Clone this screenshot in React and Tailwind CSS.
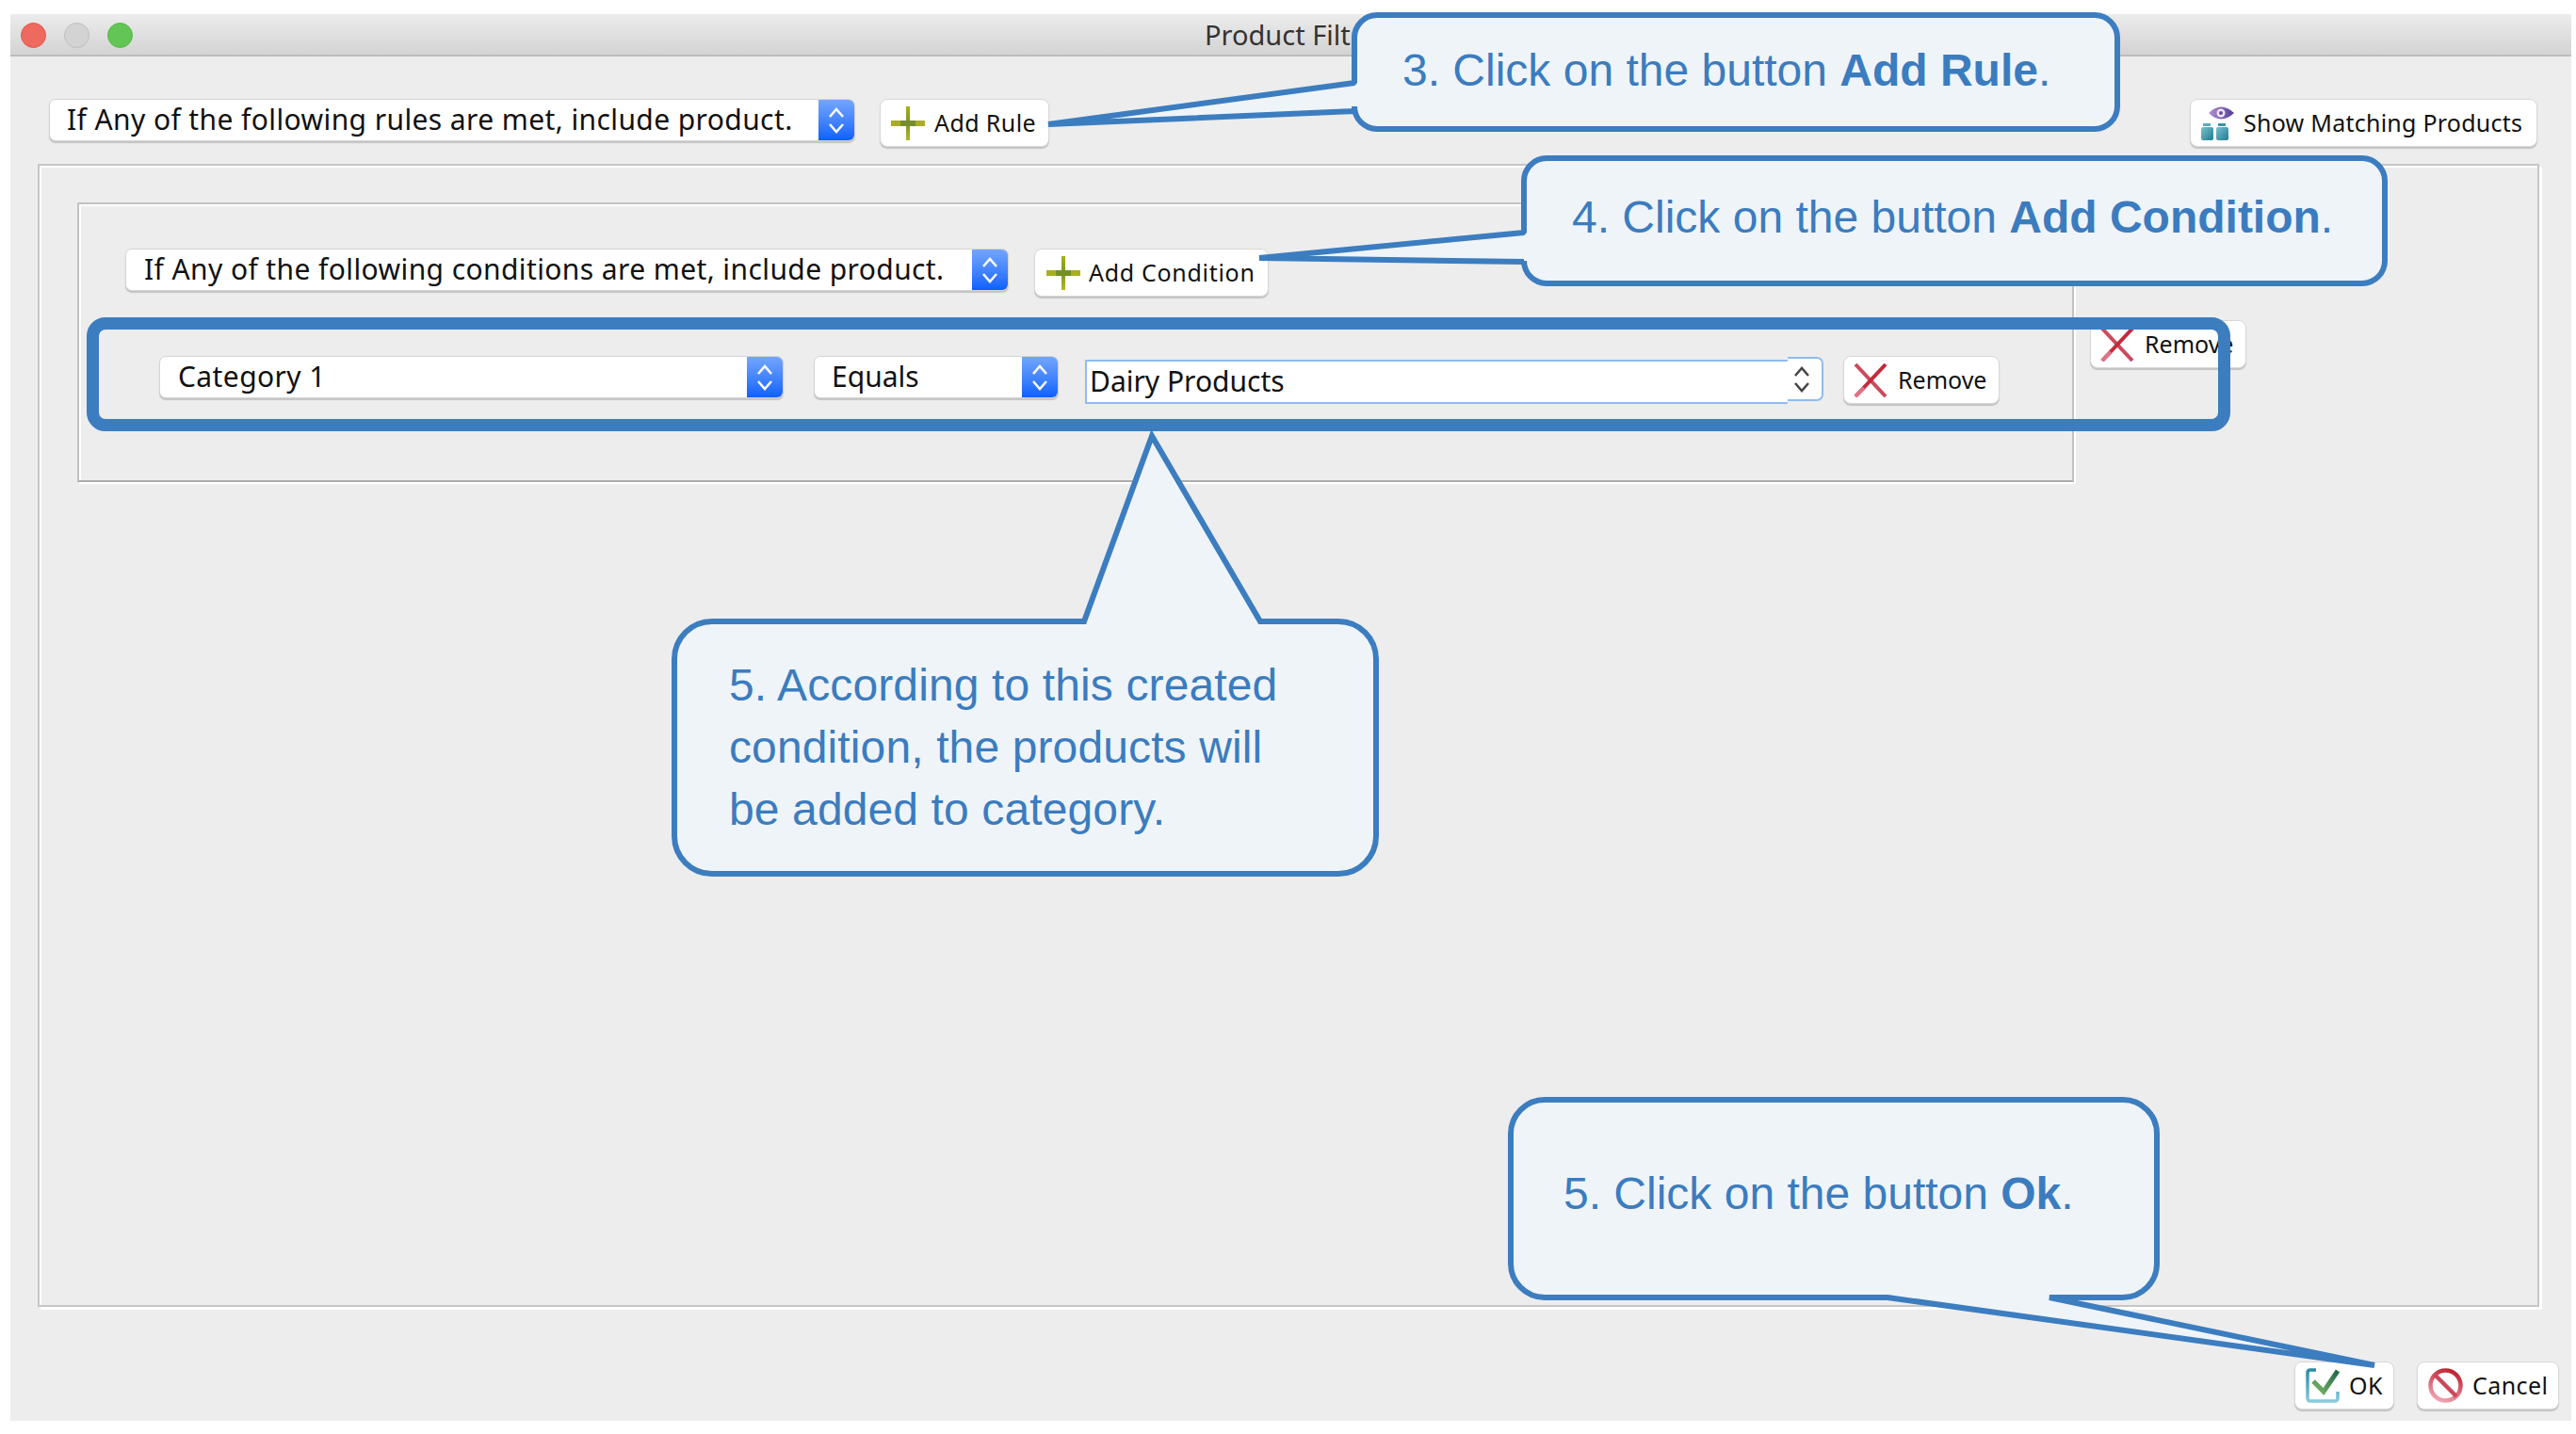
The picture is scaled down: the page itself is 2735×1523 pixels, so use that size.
import { useId } from 'react';

const uiFont = "font-['Noto_Sans',sans-serif]";
const calloutText = "absolute whitespace-nowrap font-['Liberation_Sans',Arial,sans-serif] text-[48px] leading-[66px] text-[#3b7cbf]";

function PlusIcon() {
  const id = useId();
  return (
    <svg width="36" height="36" viewBox="0 0 36 36" className="shrink-0">
      <defs>
        <linearGradient id={id} x1="0" y1="0" x2="0" y2="1">
          <stop offset="0" stopColor="#a8b01a" />
          <stop offset="0.5" stopColor="#7c9422" />
          <stop offset="1" stopColor="#b4b82a" />
        </linearGradient>
      </defs>
      <rect x="16" y="0" width="4" height="36" fill={`url(#${id})`} />
      <rect x="0" y="15" width="36" height="6" fill="#a9b01f" />
      <rect x="10" y="15" width="16" height="6" fill="#758f24" />
    </svg>
  );
}

function CrossIcon() {
  return (
    <svg width="36" height="36" viewBox="0 0 36 36" className="shrink-0">
      <path d="M2 1 L34 35" stroke="#cb4a5c" strokeWidth="4" fill="none" />
      <path d="M34 1 L2 35" stroke="#c22a3c" strokeWidth="4" fill="none" />
      <path d="M11 26 L2 35" stroke="#de7486" strokeWidth="4" fill="none" />
    </svg>
  );
}

function EyeBottlesIcon() {
  return (
    <svg width="36" height="36" viewBox="0 0 36 36" className="shrink-0">
      <defs>
        <linearGradient id="eyeFill" x1="0" y1="0" x2="1" y2="0">
          <stop offset="0" stopColor="#b192d4" />
          <stop offset="1" stopColor="#553a98" />
        </linearGradient>
        <linearGradient id="bottleFill" x1="0" y1="0" x2="1" y2="1">
          <stop offset="0" stopColor="#7cc0cf" />
          <stop offset="1" stopColor="#1d7d92" />
        </linearGradient>
      </defs>
      <path d="M9 7 Q22 -6 36 7 Q22 20 9 7Z" fill="url(#eyeFill)" />
      <circle cx="22" cy="7" r="4.5" fill="#ece6f5" />
      <circle cx="22" cy="7" r="2" fill="#6a4ba6" />
      <rect x="3" y="18" width="8" height="3" fill="#5cabbd" />
      <rect x="1" y="22" width="13" height="14" rx="2" fill="url(#bottleFill)" />
      <rect x="19" y="18" width="8" height="3" fill="#3b93a8" />
      <rect x="17" y="22" width="13" height="14" rx="2" fill="url(#bottleFill)" />
    </svg>
  );
}

function OkIcon() {
  return (
    <svg width="36" height="37" viewBox="0 0 36 37" className="shrink-0">
      <defs>
        <linearGradient id="okBox" x1="0" y1="0" x2="0" y2="1">
          <stop offset="0" stopColor="#2d8aa5" />
          <stop offset="1" stopColor="#86cadb" />
        </linearGradient>
        <linearGradient id="okCheck" x1="1" y1="0" x2="0" y2="1">
          <stop offset="0" stopColor="#21684a" />
          <stop offset="1" stopColor="#79b765" />
        </linearGradient>
      </defs>
      <path d="M11 2 H5 Q2 2 2 5 V32 Q2 35 5 35 H31 Q34 35 34 32 V25" fill="none" stroke="url(#okBox)" strokeWidth="3.5" />
      <path d="M8 14 L19 25 L34 3" fill="none" stroke="url(#okCheck)" strokeWidth="5" />
    </svg>
  );
}

function CancelIcon() {
  return (
    <svg width="37" height="37" viewBox="0 0 37 37" className="shrink-0">
      <defs>
        <linearGradient id="noEntry" x1="0.7" y1="0" x2="0.3" y2="1">
          <stop offset="0" stopColor="#bd2433" />
          <stop offset="1" stopColor="#f0a3b2" />
        </linearGradient>
      </defs>
      <circle cx="18.5" cy="18.5" r="16" fill="none" stroke="url(#noEntry)" strokeWidth="4.5" />
      <path d="M7 7 L30 30" stroke="#c9485a" strokeWidth="4.5" />
    </svg>
  );
}

function Chevrons({ className }) {
  return (
    <svg width="18" height="28" viewBox="0 0 18 28" fill="none" stroke="currentColor" strokeWidth="2.5" className={className}>
      <path d="M2 10 L9 2 L16 10" />
      <path d="M2 18 L9 26 L16 18" />
    </svg>
  );
}

function Select({ className, textClass, children }) {
  return (
    <div className={`flex h-[45px] shrink-0 items-center overflow-hidden rounded-[7px] border border-[#d4d4d4] bg-white shadow-[0_2px_1px_#c4c4c4] ${className}`}>
      <span className={`pb-[2px] text-[30px] text-[#111] ${textClass}`}>{children}</span>
      <div className="ml-auto flex h-full w-[38px] items-center justify-center bg-gradient-to-b from-[#73a5ff] to-[#0a60ff]">
        <Chevrons className="text-white" />
      </div>
    </div>
  );
}

function Button({ className, icon, label }) {
  return (
    <button className={`flex h-[51px] shrink-0 items-center rounded-[8px] border border-[#d8d8d8] bg-white text-[25px] text-[#111] shadow-[0_2px_1px_#c4c4c4] ${className}`}>
      {icon}
      <span>{label}</span>
    </button>
  );
}

function Overlay() {
  const fill = '#eff4f9';
  const stroke = '#3c7dc0';
  const paths = [
    // step 3
    'M1462 16 H2224 A24 24 0 0 1 2248 40 V113 A24 24 0 0 1 2224 137 H1462 A24 24 0 0 1 1438 113 V118 L1113 132 L1438 88 V40 A24 24 0 0 1 1462 16 Z',
    // step 4
    'M1642 168 H2508 A24 24 0 0 1 2532 192 V277 A24 24 0 0 1 2508 301 H1642 A24 24 0 0 1 1618 277 V278 L1337 274 L1618 247 V192 A24 24 0 0 1 1642 168 Z',
    // step 5, condition
    'M756 660 H1151 L1223 463 L1338 660 H1421 A40 40 0 0 1 1461 700 V888 A40 40 0 0 1 1421 928 H756 A40 40 0 0 1 716 888 V700 A40 40 0 0 1 756 660 Z',
    // step 5, ok
    'M1640 1168 H2254 A36 36 0 0 1 2290 1204 V1342 A36 36 0 0 1 2254 1378 H2176 L2521 1450 L2004 1378 H1640 A36 36 0 0 1 1604 1342 V1204 A36 36 0 0 1 1640 1168 Z',
  ];
  return (
    <svg width="2735" height="1523" viewBox="0 0 2735 1523" className="pointer-events-none absolute left-0 top-0">
      {paths.map((d, i) => (
        <path key={i} d={d} fill={fill} stroke={stroke} strokeWidth="6" strokeLinejoin={i === 2 ? 'miter' : 'bevel'} strokeMiterlimit="12" />
      ))}
    </svg>
  );
}

export default function App() {
  return (
    <div className={`relative h-screen overflow-hidden bg-white pb-[14px] pl-[11px] pr-[5px] pt-[15px] ${uiFont}`}>
      <div className="flex h-full flex-col bg-[#ededed]">
        {/* title bar */}
        <div className="grid h-[45px] shrink-0 grid-cols-3 items-center border-b-2 border-[#bdbdbd] bg-gradient-to-b from-[#ececec] to-[#d3d3d3]">
          <div className="flex items-center gap-[19px] pl-[11px]">
            <span className="h-[27px] w-[27px] rounded-full border border-[#e0584e] bg-[#ee6a5f]" />
            <span className="h-[27px] w-[27px] rounded-full border border-[#bdbdbd] bg-[#d3d3d3]" />
            <span className="h-[27px] w-[27px] rounded-full border border-[#55b948] bg-[#62c555]" />
          </div>
          <div className="whitespace-nowrap pb-[2px] text-center text-[29px] text-[#333]">Product Filter</div>
        </div>

        {/* rule toolbar */}
        <div className="flex shrink-0 items-start pl-[41px] pr-[36px] pt-[45px]">
          <Select className="w-[856px]" textClass="pl-[18px] tracking-[0.4px]">If Any of the following rules are met, include product.</Select>
          <Button className="ml-[26px] w-[180px] gap-[10px] pl-[11px] tracking-[0.4px]" icon={<PlusIcon />} label="Add Rule" />
          <Button className="ml-auto w-[369px] gap-[10px] pl-[10px] tracking-[0.25px]" icon={<EyeBottlesIcon />} label="Show Matching Products" />
        </div>

        {/* rules panel */}
        <div className="ml-[29px] mr-[34px] mt-[18px] flex flex-1 items-start border-2 border-[#c6c6c6] pl-[40px] pt-[39px] shadow-[inset_2px_2px_0_#fff,3px_3px_0_#fff]">
          <div className="flex h-[297px] w-[2120px] shrink-0 flex-col border-2 border-[#c2c2c2] border-b-[#adadad] pl-[49px] pt-[47px] shadow-[inset_2px_2px_0_#fff,2px_2px_0_#fff]">
            <div className="flex items-start gap-[27px]">
              <Select className="w-[938px]" textClass="pl-[19px] tracking-[0.4px]">If Any of the following conditions are met, include product.</Select>
              <Button className="w-[249px] gap-[9px] pl-[12px] tracking-[0.7px]" icon={<PlusIcon />} label="Add Condition" />
            </div>
            <div className="ml-[36px] mt-[63px] flex items-start">
              <Select className="w-[663px]" textClass="pl-[19px] tracking-[0.4px]">Category 1</Select>
              <Select className="ml-[32px] w-[260px]" textClass="pl-[18px]">Equals</Select>
              <div className="ml-[28px] mt-[4px] flex w-[784px] shrink-0">
                <div className="flex h-[47px] flex-1 items-center border-2 border-r-0 border-[#8fbcee] bg-white pb-[2px] pl-[3px] text-[30px] text-[#111]">Dairy Products</div>
                <div className="-mt-[3px] flex h-[47px] w-[38px] items-center justify-center rounded-r-[7px] border-2 border-l-0 border-[#8fbcee] bg-white pr-[7px]">
                  <Chevrons className="text-[#444]" />
                </div>
              </div>
              <Button className="ml-[21px] w-[166px] gap-[11px] pl-[10px]" icon={<CrossIcon />} label="Remove" />
            </div>
          </div>
          <Button className="ml-[17px] mt-[125px] w-[166px] gap-[11px] pl-[10px]" icon={<CrossIcon />} label="Remove" />
        </div>

        {/* dialog buttons */}
        <div className="flex shrink-0 justify-end gap-[24px] pb-[12px] pr-[13px] pt-[58px]">
          <Button className="w-[106px] gap-[10px] pl-[11px] tracking-[0.4px]" icon={<OkIcon />} label="OK" />
          <Button className="w-[151px] gap-[10px] pl-[11px] tracking-[0.4px]" icon={<CancelIcon />} label="Cancel" />
        </div>
      </div>

      {/* highlight around the created condition */}
      <div className="pointer-events-none absolute left-[92px] top-[337px] h-[121px] w-[2276px] rounded-[20px] border-[13px] border-[#3c7dc0]" />

      {/* tutorial callouts */}
      <Overlay />
      <div className={`${calloutText} left-[1489px] top-[42px]`}>3. Click on the button <b>Add Rule</b>.</div>
      <div className={`${calloutText} left-[1669px] top-[198px]`}>4. Click on the button <b>Add Condition</b>.</div>
      <div className={`${calloutText} left-[774px] top-[695px] tracking-[0.12px]`}>
        5. According to this created<br />condition, the products will<br />be added to category.
      </div>
      <div className={`${calloutText} left-[1660px] top-[1235px]`}>5. Click on the button <b>Ok</b>.</div>
    </div>
  );
}
